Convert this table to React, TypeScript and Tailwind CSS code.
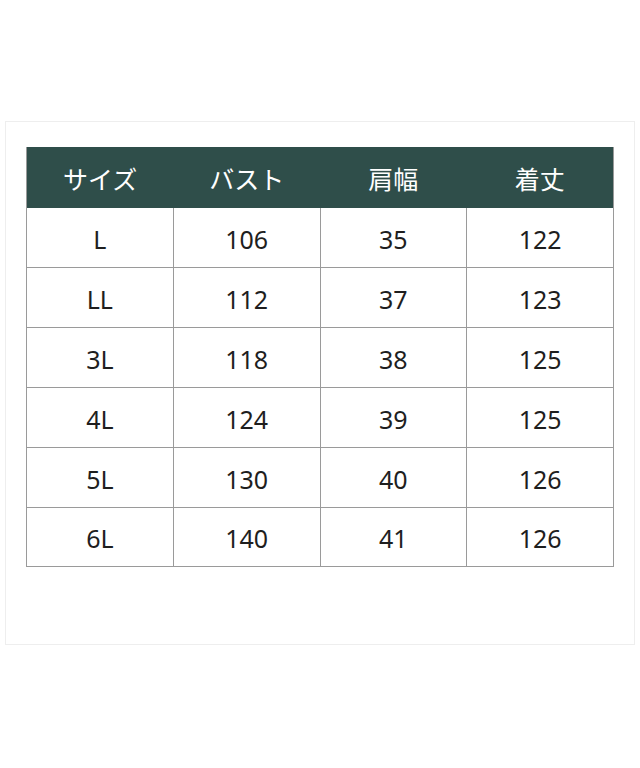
import React from "react";

const headers = ["サイズ", "バスト", "肩幅", "着丈"];
const rows = [
  ["L", "106", "35", "122"],
  ["LL", "112", "37", "123"],
  ["3L", "118", "38", "125"],
  ["4L", "124", "39", "125"],
  ["5L", "130", "40", "126"],
  ["6L", "140", "41", "126"],
];

export default function App() {
  return (
    <div
      className="w-[640px] h-[768px] bg-white pt-[121px] pl-[5px]"
      style={{ fontFamily: '"Noto Sans", "Noto Sans CJK JP", sans-serif' }}
    >
      <div className="w-[630px] h-[524px] border border-[#eeeeee] pl-[20px] pt-[25px]">
        <div className="w-[588px] border-l border-r border-b border-[#9a9a9a]">
          <div className="flex h-[61px] bg-[#2f4e4a] text-white text-[25px]">
            {headers.map((h, i) => (
              <div
                key={i}
                className="flex-1 flex items-center justify-center pt-[5px]"
              >
                {h}
              </div>
            ))}
          </div>
          {rows.map((r, ri) => (
            <div
              key={ri}
              className={
                ri === rows.length - 1
                  ? "flex h-[58px] text-[25px] text-[#1e1e1e]"
                  : "flex h-[60px] border-b border-[#9a9a9a] text-[25px] text-[#1e1e1e]"
              }
            >
              {r.map((c, ci) => (
                <div
                  key={ci}
                  className={
                    ci < 3
                      ? "flex-1 flex items-center justify-center border-r border-[#9a9a9a] pt-[4px]"
                      : "flex-1 flex items-center justify-center pt-[4px]"
                  }
                >
                  {c}
                </div>
              ))}
            </div>
          ))}
        </div>
      </div>
    </div>
  );
}
